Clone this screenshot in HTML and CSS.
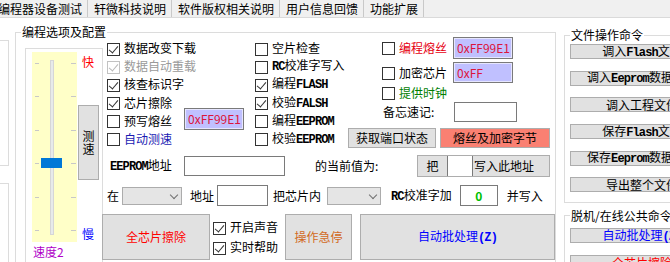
FILE: index.html
```html
<!DOCTYPE html>
<html lang="zh-CN">
<head>
    <meta charset="UTF-8">
    <title>编程器设备测试</title>
    <link rel="stylesheet" href="styles.css">
</head>
<body>
<div class="tabs">
    <span class="tab first">编程器设备测试</span>
    <span class="tab">轩微科技说明</span>
    <span class="tab">软件版权相关说明</span>
    <span class="tab">用户信息回馈</span>
    <span class="tab">功能扩展</span>
</div>
<div class="page">
    <div class="side">
        <div class="side-box one"></div>
        <div class="side-box two"></div>
    </div>

    <fieldset class="group options">
        <legend>编程选项及配置</legend>
        <div class="options-body">
            <div class="speed">
                <div class="slider">
                    <span class="ticks left"></span>
                    <span class="ticks right"></span>
                    <span class="track"></span>
                    <span class="thumb"></span>
                </div>
                <div class="speed-side">
                    <span class="fast">快</span>
                    <span class="btn test"><span>测</span><span>速</span></span>
                    <span class="slow">慢</span>
                </div>
                <span class="speed-label">速度2</span>
            </div>

            <div class="main">
                <div class="top">
                    <div class="col1">
                        <div class="checks">
                            <label class="chk"><i class="cb on"></i><span>数据改变下载</span></label>
                            <label class="chk off"><i class="cb on"></i><span>数据自动重载</span></label>
                            <label class="chk"><i class="cb on"></i><span>核查标识字</span></label>
                            <label class="chk"><i class="cb on"></i><span>芯片擦除</span></label>
                            <label class="chk"><i class="cb"></i><span>预写熔丝</span></label>
                            <label class="chk navy"><i class="cb"></i><span>自动测速</span></label>
                        </div>
                        <span class="field lav fuse">0xFF99E1</span>
                    </div>
                    <div class="checks col2">
                        <label class="chk"><i class="cb"></i><span>空片检查</span></label>
                        <label class="chk"><i class="cb"></i><span><span class="en">RC</span>校准字写入</span></label>
                        <label class="chk"><i class="cb on"></i><span>编程<span class="en">FLASH</span></span></label>
                        <label class="chk"><i class="cb on"></i><span>校验<span class="en">FALSH</span></span></label>
                        <label class="chk"><i class="cb"></i><span>编程<span class="en">EEPROM</span></span></label>
                        <label class="chk"><i class="cb"></i><span>校验<span class="en">EEPROM</span></span></label>
                    </div>
                    <div class="col3">
                        <div class="c3row r1">
                            <label class="chk red"><i class="cb"></i><span>编程熔丝</span></label>
                            <span class="field lav">0xFF99E1</span>
                        </div>
                        <div class="c3row r2">
                            <label class="chk"><i class="cb"></i><span>加密芯片</span></label>
                            <span class="field lav">0xFF</span>
                        </div>
                        <div class="c3row r3">
                            <label class="chk green"><i class="cb"></i><span>提供时钟</span></label>
                        </div>
                        <div class="c3row memo">
                            <span class="memo-label">备忘速记:</span>
                            <span class="field memo-field"></span>
                        </div>
                        <div class="c3row buttons">
                            <span class="btn port">获取端口状态</span>
                            <span class="btn salmon">熔丝及加密字节</span>
                        </div>
                    </div>
                </div>

                <div class="row eeprom">
                    <span class="addr-label"><span class="en">EEPROM</span>地址</span>
                    <span class="field addr"></span>
                    <span class="value-label">的当前值为:</span>
                    <span class="btn write">
                        <span class="write-ba">把</span>
                        <span class="slot"></span>
                        <span class="write-text">写入此地址</span>
                    </span>
                </div>

                <div class="row copy">
                    <span class="at">在</span>
                    <span class="combo c1"></span>
                    <span class="l-addr">地址</span>
                    <span class="field small"></span>
                    <span class="l-chip">把芯片内</span>
                    <span class="combo c2"></span>
                    <span class="l-rc"><span class="en">RC</span>校准字加</span>
                    <span class="field rc">0</span>
                    <span class="l-write">并写入</span>
                </div>

                <div class="row actions">
                    <span class="btn erase">全芯片擦除</span>
                    <div class="checks sound">
                        <label class="chk"><i class="cb on"></i><span>开启声音</span></label>
                        <label class="chk"><i class="cb on"></i><span>实时帮助</span></label>
                    </div>
                    <span class="btn stop">操作急停</span>
                    <span class="btn batch"><span>自动批处理<span class="en">(Z)</span></span></span>
                </div>
            </div>
        </div>
    </fieldset>

    <div class="right">
        <fieldset class="group files">
            <legend>文件操作命令</legend>
            <div class="cmd-list">
                <span class="btn cmd"><span>调入<span class="en">Flash</span>文件</span></span>
                <span class="btn cmd"><span>调入<span class="en">Eeprom</span>数据文件</span></span>
                <span class="btn cmd">调入工程文件</span>
                <span class="btn cmd"><span>保存<span class="en">Flash</span>文件</span></span>
                <span class="btn cmd"><span>保存<span class="en">Eeprom</span>数据文件</span></span>
                <span class="btn cmd">导出整个文件</span>
            </div>
        </fieldset>
        <fieldset class="group common">
            <legend>脱机/在线公共命令</legend>
            <div class="cmd-list">
                <span class="btn cmd blue"><span>自动批处理<span class="en">(Z)</span></span></span>
                <span class="btn cmd red">全芯片擦除</span>
            </div>
        </fieldset>
    </div>
</div>
</body>
</html>
```

FILE: styles.css
```css
*{
    margin:0;
    padding:0;
    box-sizing:border-box;
}
body{
    width:670px;
    height:262px;
    overflow:hidden;
    background:#fff;
    font:12px/14px "Noto Sans CJK SC", sans-serif;
    color:#000;
}
.en{
    font-family:"Liberation Mono", monospace;
    font-size:12px;
    font-weight:bold;
    letter-spacing:-0.9px;
}

/* tab strip */
.tabs{
    display:flex;
    height:18px;
    background:#f0f0f0;
    border-bottom:1px solid #dadada;
    white-space:nowrap;
}
.tab{
    padding:0 5px 0 6px;
    line-height:17px;
    border-right:1px solid #c9c9c9;
}
.tab.first{
    margin-left:-8px;
}

.page{
    display:flex;
    align-items:flex-start;
}
.side{
    width:9px;
    flex:none;
}
.side-box{
    border:1px solid #dcdcdc;
    border-left:none;
}
.side-box.one{
    margin-top:22px;
    height:126px;
}
.side-box.two{
    margin-top:17px;
    height:100px;
}

/* group boxes */
.group{
    border:1px solid #dcdcdc;
    min-width:0;
}
.group legend{
    margin-left:5px;
    padding:0 1px;
    line-height:12px;
}
.options{
    width:541px;
    height:260px;
    margin:8px 0 0 6px;
    flex:none;
}
.options-body{
    display:flex;
    align-items:flex-start;
    padding-left:9px;
}

/* speed slider */
.speed{
    display:grid;
    grid-template-columns:45px 24px;
    grid-template-rows:190px 14px;
    row-gap:3px;
    width:78px;
    height:232px;
    margin-top:10px;
    padding:3px 0 0 6px;
    border:1px solid #dcdcdc;
    flex:none;
}
.slider{
    position:relative;
    background:#ffffc8;
}
.track{
    position:absolute;
    left:18px;
    top:8px;
    bottom:7px;
    width:4px;
    background:#e7eaea;
    border:1px solid #d6d6d6;
}
.ticks{
    position:absolute;
    top:11px;
    height:170px;
    width:4px;
    background:repeating-linear-gradient(to bottom, #c8c8c8 0 1px, transparent 1px 33.4px);
}
.ticks.left{
    left:3px;
}
.ticks.right{
    left:31px;
    width:5px;
}
.thumb{
    position:absolute;
    left:9px;
    top:106px;
    width:21px;
    height:10px;
    background:#0078d7;
}
.speed-side{
    display:flex;
    flex-direction:column;
    align-items:flex-start;
    padding-left:1px;
}
.fast{
    margin:3px 0 0 4px;
    color:#f00;
}
.slow{
    margin:47px 0 0 4px;
    color:#00f;
}
.btn{
    display:flex;
    align-items:center;
    justify-content:center;
    background:#e1e1e1;
    border:1px solid #adadad;
    white-space:nowrap;
}
.btn.test{
    flex-direction:column;
    width:21px;
    height:75px;
    margin-top:36px;
    line-height:12.5px;
}
.speed-label{
    grid-column:1 / -1;
    margin-left:1px;
    color:#b000c8;
}

/* main area */
.main{
    width:452px;
    margin-top:-1px;
    flex:none;
}
.top{
    display:flex;
    height:111px;
}
.checks{
    display:flex;
    flex-direction:column;
    white-space:nowrap;
}
.chk{
    display:flex;
    align-items:center;
    gap:4px;
    height:18.3px;
}
.cb{
    position:relative;
    width:13px;
    height:13px;
    margin-top:2px;
    border:1px solid #333;
    background:#fff;
    flex:none;
}
.cb.on::after{
    content:"";
    position:absolute;
    left:3px;
    top:0;
    width:4px;
    height:8px;
    border:solid #333;
    border-width:0 1.4px 1.4px 0;
    transform:rotate(40deg);
}
.chk.off{
    color:#9a9a9a;
}
.chk.off .cb{
    border-color:#c2c2c2;
}
.chk.off .cb::after{
    border-color:#b8b8b8;
}
.chk.navy{
    color:#1b1bb3;
}
.chk.red{
    color:#e60012;
}
.chk.green{
    color:#008000;
}

.col1{
    display:flex;
    width:152px;
    padding:2px 0 0 4px;
    flex:none;
}
.col1 .checks{
    width:77px;
}
.field{
    display:flex;
    align-items:center;
    background:#fff;
    border:1px solid #7a7a7a;
    flex:none;
}
.field.lav{
    width:60px;
    height:22px;
    padding-left:3px;
    background:#c0c0ff;
    color:#dc143c;
    box-shadow:inset 0 0 0 1px #e6e6ff;
}
.field.fuse{
    margin-top:69px;
}
.col2{
    width:90px;
    padding-top:2px;
    flex:none;
}
.col3{
    display:flex;
    flex-direction:column;
    flex:1;
}
.c3row{
    display:flex;
    align-items:center;
}
.c3row .chk{
    height:auto;
    width:71px;
}
.c3row .cb{
    margin-top:1px;
}
.r1{
    height:22px;
    padding-left:37px;
}
.r2{
    height:21px;
    margin-top:3px;
    padding-left:37px;
}
.r2 .field.lav{
    height:21px;
}
.r3{
    height:19px;
    padding-left:37px;
}
.memo{
    height:20px;
    padding-left:38px;
}
.memo-label{
    width:71px;
}
.memo-field{
    width:63px;
    height:20px;
}
.buttons{
    height:20px;
    margin-top:6px;
    padding-left:3px;
    gap:4px;
}
.btn.port{
    width:88px;
    height:20px;
}
.btn.salmon{
    width:110px;
    height:20px;
    background:#fa8072;
}

.row{
    display:flex;
    align-items:center;
    white-space:nowrap;
}
.eeprom{
    height:22px;
    margin-top:7px;
    padding-left:7px;
}
.addr-label{
    width:74px;
}
.field.addr{
    width:101px;
    height:20px;
}
.value-label{
    width:102px;
    margin-left:30px;
}
.btn.write{
    width:133px;
    height:22px;
    justify-content:flex-start;
}
.write-ba{
    width:29px;
    text-align:center;
}
.slot{
    width:26px;
    height:20px;
    background:#fff;
    border:solid #7a7a7a;
    border-width:0 1px;
}
.write-text{
    padding-left:1px;
}

.copy{
    height:21px;
    margin-top:8px;
    padding-left:4px;
}
.combo{
    position:relative;
    width:60px;
    height:18px;
    margin-left:3px;
    background:#e5e5e5;
    border:1px solid #acacac;
    flex:none;
}
.combo::after{
    content:"";
    position:absolute;
    right:4px;
    top:4px;
    width:5px;
    height:5px;
    border:solid #707070;
    border-width:0 1px 1px 0;
    transform:rotate(45deg);
}
.combo.c2{
    width:54px;
    margin-left:6px;
}
.l-addr{
    margin-left:8px;
}
.field.small{
    width:51px;
    height:21px;
    margin-left:3px;
}
.l-chip{
    margin-left:5px;
}
.l-rc{
    margin-left:10px;
}
.field.rc{
    width:38px;
    height:21px;
    margin-left:8px;
    justify-content:center;
    color:#00c000;
    font-weight:bold;
}
.l-write{
    margin-left:9px;
}

.actions{
    align-items:flex-start;
    height:46px;
    margin:8px 0 0 -1px;
}
.btn.erase{
    width:108px;
    height:46px;
    color:#f00;
}
.checks.sound{
    width:75px;
    padding:3px 0 0 3px;
}
.sound .chk{
    height:20px;
}
.btn.stop{
    width:67px;
    height:46px;
    color:#d2691e;
}
.btn.batch{
    width:195px;
    height:46px;
    margin-left:8px;
    color:#00f;
}

/* right command column */
.right{
    width:160px;
    margin-left:8px;
    flex:none;
}
.files{
    margin-top:11px;
}
.cmd-list{
    display:flex;
    flex-direction:column;
    gap:11.7px;
    padding:3px 0 10px 5px;
}
.btn.cmd{
    width:144px;
    height:15px;
    line-height:13px;
}
.common{
    margin-top:6.5px;
    height:80px;
}
.common .cmd-list{
    padding-top:6.5px;
}
.btn.cmd.blue{
    color:#00f;
}
.btn.cmd.red{
    color:#f00;
}
```
